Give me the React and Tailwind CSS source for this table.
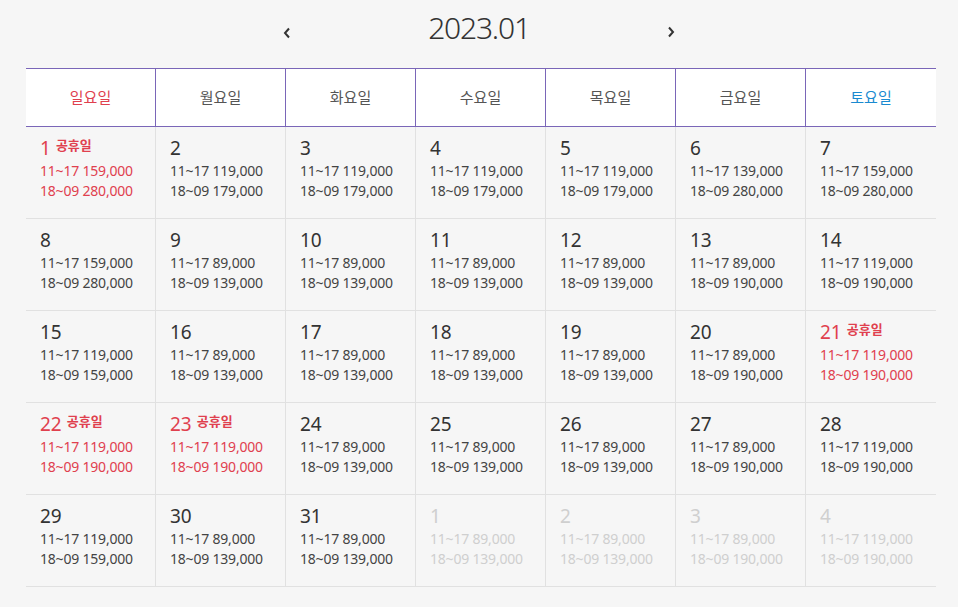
const weekdays = [
  { label: "일요일", color: "text-[#e0404e]" },
  { label: "월요일", color: "text-[#555]" },
  { label: "화요일", color: "text-[#555]" },
  { label: "수요일", color: "text-[#555]" },
  { label: "목요일", color: "text-[#555]" },
  { label: "금요일", color: "text-[#555]" },
  { label: "토요일", color: "text-[#1a8ad0]" },
];

// [day, day price, night price, type] type: h = holiday, n = next month
const weeks = [
  [[1, "159,000", "280,000", "h"], [2, "119,000", "179,000"], [3, "119,000", "179,000"], [4, "119,000", "179,000"], [5, "119,000", "179,000"], [6, "139,000", "280,000"], [7, "159,000", "280,000"]],
  [[8, "159,000", "280,000"], [9, "89,000", "139,000"], [10, "89,000", "139,000"], [11, "89,000", "139,000"], [12, "89,000", "139,000"], [13, "89,000", "190,000"], [14, "119,000", "190,000"]],
  [[15, "119,000", "159,000"], [16, "89,000", "139,000"], [17, "89,000", "139,000"], [18, "89,000", "139,000"], [19, "89,000", "139,000"], [20, "89,000", "190,000"], [21, "119,000", "190,000", "h"]],
  [[22, "119,000", "190,000", "h"], [23, "119,000", "190,000", "h"], [24, "89,000", "139,000"], [25, "89,000", "139,000"], [26, "89,000", "139,000"], [27, "89,000", "190,000"], [28, "119,000", "190,000"]],
  [[29, "119,000", "159,000"], [30, "89,000", "139,000"], [31, "89,000", "139,000"], [1, "89,000", "139,000", "n"], [2, "89,000", "139,000", "n"], [3, "89,000", "190,000", "n"], [4, "119,000", "190,000", "n"]],
];

function Cell({ day, price1, price2, type, last }) {
  const holiday = type === "h";
  const next = type === "n";
  const numColor = holiday ? "text-[#e0404e]" : next ? "text-[#cfcfcf]" : "text-[#333]";
  const priceColor = holiday ? "text-[#e0404e]" : next ? "text-[#cfcfcf]" : "text-[#444]";
  return (
    <div className={`h-[92px] border-b border-[#e1e1e1] pl-[14px] pt-[8px] ${last ? "" : "border-r"}`}>
      <div className={`flex items-start h-[26px] ${numColor}`}>
        <span className="text-[19px] leading-[26px]">{day}</span>
        {holiday && <span className="ml-[5px] text-[13px] font-bold leading-[20px]">공휴일</span>}
      </div>
      <div className={`text-[14px] leading-[20px] tracking-[-0.2px] ${priceColor}`}>
        <div>11~17 {price1}</div>
        <div>18~09 {price2}</div>
      </div>
    </div>
  );
}

export default function App() {
  return (
    <div
      className="min-h-[607px] bg-[#f6f6f6] pt-[9px]"
      style={{ fontFamily: '"Noto Sans", "Noto Sans CJK KR", sans-serif' }}
    >
      <div className="flex items-center justify-center h-[38px]">
        <svg width="8" height="12" viewBox="0 0 8 12" className="mt-[9px]">
          <polyline points="6,1.5 2,6 6,10.5" fill="none" stroke="#333" strokeWidth="2" />
        </svg>
        <div className="w-[376px] text-center text-[30px] leading-[38px] font-light text-[#333] tracking-[-1.2px]">
          2023.01
        </div>
        <svg width="8" height="12" viewBox="0 0 8 12" className="mt-[7px]">
          <polyline points="2,1.5 6,6 2,10.5" fill="none" stroke="#333" strokeWidth="2" />
        </svg>
      </div>

      <div className="ml-[26px] mt-[21px] w-[910px]">
        <div className="grid grid-cols-7 bg-white border-y border-[#7a66b8]">
          {weekdays.map((w, i) => (
            <div
              key={w.label}
              className={`h-[57px] flex items-center justify-center text-[15px] ${w.color} ${i < 6 ? "border-r border-[#7a66b8]" : ""}`}
            >
              {w.label}
            </div>
          ))}
        </div>
        {weeks.map((week, wi) => (
          <div key={wi} className="grid grid-cols-7">
            {week.map(([day, p1, p2, type], di) => (
              <Cell key={di} day={day} price1={p1} price2={p2} type={type} last={di === 6} />
            ))}
          </div>
        ))}
      </div>
    </div>
  );
}
